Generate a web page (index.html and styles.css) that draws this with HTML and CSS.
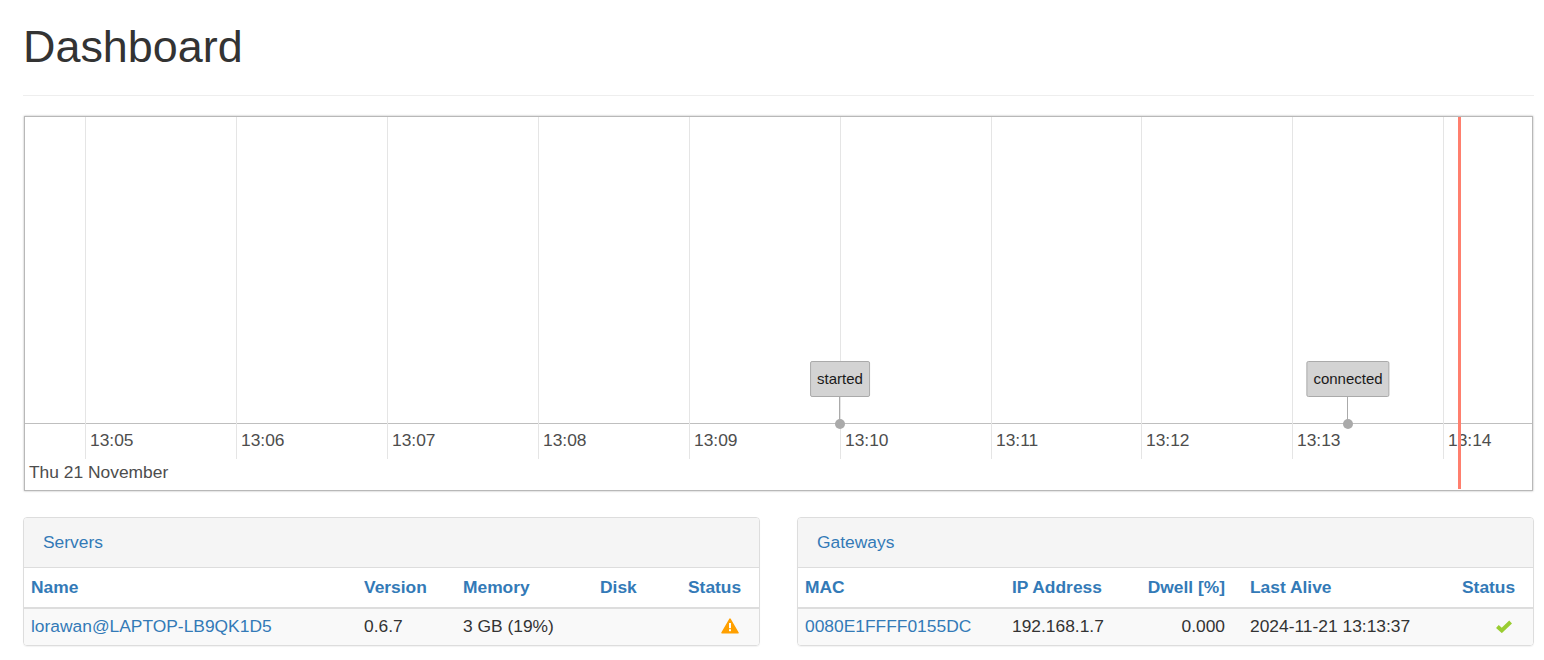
FILE: index.html
```html
<!DOCTYPE html>
<html lang="en">
<head>
    <meta charset="UTF-8">
    <title>Dashboard</title>
    <link rel="stylesheet" href="styles.css">
</head>
<body>
    <div class="page">
        <div class="page-header">
            <h1>Dashboard</h1>
        </div>

        <!-- timeline: ticks and events sit on a free canvas -->
        <div class="timeline">
            <div class="axis"></div>

            <div class="tick" style="left: 60px"><span>13:05</span></div>
            <div class="tick" style="left: 211px"><span>13:06</span></div>
            <div class="tick" style="left: 362px"><span>13:07</span></div>
            <div class="tick" style="left: 513px"><span>13:08</span></div>
            <div class="tick" style="left: 664px"><span>13:09</span></div>
            <div class="tick" style="left: 815px"><span>13:10</span></div>
            <div class="tick" style="left: 966px"><span>13:11</span></div>
            <div class="tick" style="left: 1116px"><span>13:12</span></div>
            <div class="tick" style="left: 1267px"><span>13:13</span></div>
            <div class="tick" style="left: 1418px"><span>13:14</span></div>

            <div class="date-label">Thu 21 November</div>

            <div class="event" style="left: 815px">
                <div class="event-box">started</div>
                <div class="event-line"></div>
                <div class="event-dot"></div>
            </div>
            <div class="event" style="left: 1323px">
                <div class="event-box">connected</div>
                <div class="event-line"></div>
                <div class="event-dot"></div>
            </div>

            <div class="now-line"></div>
        </div>

        <div class="panels">
            <div class="panel">
                <div class="panel-heading"><a href="#">Servers</a></div>
                <table class="servers">
                    <thead>
                        <tr>
                            <th class="col-name"><a href="#">Name</a></th>
                            <th class="col-version"><a href="#">Version</a></th>
                            <th class="col-memory"><a href="#">Memory</a></th>
                            <th class="col-disk"><a href="#">Disk</a></th>
                            <th class="col-status"><a href="#">Status</a></th>
                        </tr>
                    </thead>
                    <tbody>
                        <tr>
                            <td><a href="#">lorawan@LAPTOP-LB9QK1D5</a></td>
                            <td>0.6.7</td>
                            <td>3 GB (19%)</td>
                            <td></td>
                            <td class="status-cell">
                                <svg class="icon" width="18" height="16" viewBox="0 0 18 16">
                                    <path fill="#ffa000" stroke="#ffa000" stroke-width="1.6" stroke-linejoin="round" d="M9 1.2 L17 14.8 L1 14.8 Z"/>
                                    <rect x="8" y="5" width="2" height="5.2" fill="#fff"/>
                                    <rect x="8" y="11.2" width="2" height="2" fill="#fff"/>
                                </svg>
                            </td>
                        </tr>
                    </tbody>
                </table>
            </div>

            <div class="panel">
                <div class="panel-heading"><a href="#">Gateways</a></div>
                <table class="gateways">
                    <thead>
                        <tr>
                            <th class="col-mac"><a href="#">MAC</a></th>
                            <th class="col-ip"><a href="#">IP Address</a></th>
                            <th class="col-dwell num"><a href="#">Dwell [%]</a></th>
                            <th class="col-alive"><a href="#">Last Alive</a></th>
                            <th class="col-status"><a href="#">Status</a></th>
                        </tr>
                    </thead>
                    <tbody>
                        <tr>
                            <td><a href="#">0080E1FFFF0155DC</a></td>
                            <td>192.168.1.7</td>
                            <td class="num">0.000</td>
                            <td>2024-11-21 13:13:37</td>
                            <td class="status-cell check-cell">
                                <svg class="icon" width="16" height="13" viewBox="0 0 16 13">
                                    <path fill="none" stroke="#9acd32" stroke-width="4" d="M1.4 6.4 L5.8 10.4 L14.6 2"/>
                                </svg>
                            </td>
                        </tr>
                    </tbody>
                </table>
            </div>
        </div>
    </div>
</body>
</html>
```

FILE: styles.css
```css
body { font-family: "Liberation Sans", Arial, sans-serif; font-size: 17.4px; color: #333; background: #fff; margin: 0; padding: 0; }
a { color: #337ab7; text-decoration: none; }

.page { padding: 0 10px 14px 23px; }
.page-header { height: 95px; border-bottom: 1px solid #eee; margin-bottom: 20px; }
h1 { margin: 0; padding-top: 22px; font-size: 44.9px; font-weight: 400; line-height: 50px; color: #333; }

.timeline { position: relative; height: 373px; margin: 0 1px; border: 1px solid #b8b8b8; box-shadow: 0 0 2px rgba(0,0,0,0.3); overflow: hidden; }
.axis { position: absolute; left: 0; right: 0; top: 306px; height: 1px; background: #bfbfbf; }
.tick { position: absolute; top: 0; height: 342px; border-left: 1px solid #e5e5e5; }
.tick span { position: absolute; left: 4px; top: 313px; line-height: 20px; color: #4d4d4d; white-space: nowrap; }
.date-label { position: absolute; left: 4px; top: 345px; line-height: 20px; color: #4d4d4d; }

.event { position: absolute; top: 244px; width: 0; }
.event-box { position: absolute; left: 0; top: 0; transform: translateX(-50%); height: 34px; line-height: 34px; padding: 0 6px; font-size: 15px; color: #1a1a1a; white-space: nowrap; background: #d3d3d3; border: 1px solid #aaa; border-radius: 2px; }
.event-line { position: absolute; left: -1px; top: 36px; width: 1px; height: 26px; background: #aaa; }
.event-dot { position: absolute; left: -5px; top: 58px; width: 10px; height: 10px; border-radius: 50%; background: #aaa; }

.now-line { position: absolute; left: 1433px; top: 0; bottom: 1px; width: 3px; background: #ff7f6e; }

.panels { display: grid; grid-template-columns: 737px 737px; column-gap: 37px; margin-top: 26px; }
.panel { border: 1px solid #ddd; border-radius: 4px; box-shadow: 0 1px 1px rgba(0,0,0,0.05); overflow: hidden; }
.panel-heading { height: 49px; line-height: 48px; padding-left: 19px; background: #f5f5f5; border-bottom: 1px solid #ddd; box-sizing: content-box; }

table { width: 100%; border-collapse: collapse; table-layout: fixed; }
th, td { box-sizing: border-box; padding: 0 18px 0 7px; text-align: left; white-space: nowrap; }
th { height: 40px; font-weight: 700; border-bottom: 2px solid #ddd; }
td { height: 37px; padding-bottom: 1px; color: #333; background: #f9f9f9; }
.num { text-align: right; }
.status-cell { text-align: right; padding-right: 20px; padding-bottom: 3px; }
.check-cell { padding-right: 21px; }
.icon { display: inline-block; vertical-align: middle; }

.col-name { width: 333px; }
.col-version { width: 99px; }
.col-memory { width: 137px; }
.col-disk { width: 88px; }
.col-status { width: 78px; }
.col-mac { width: 207px; }
.col-ip { width: 102px; }
.col-dwell { width: 136px; }
.col-alive { width: 212px; }
```
